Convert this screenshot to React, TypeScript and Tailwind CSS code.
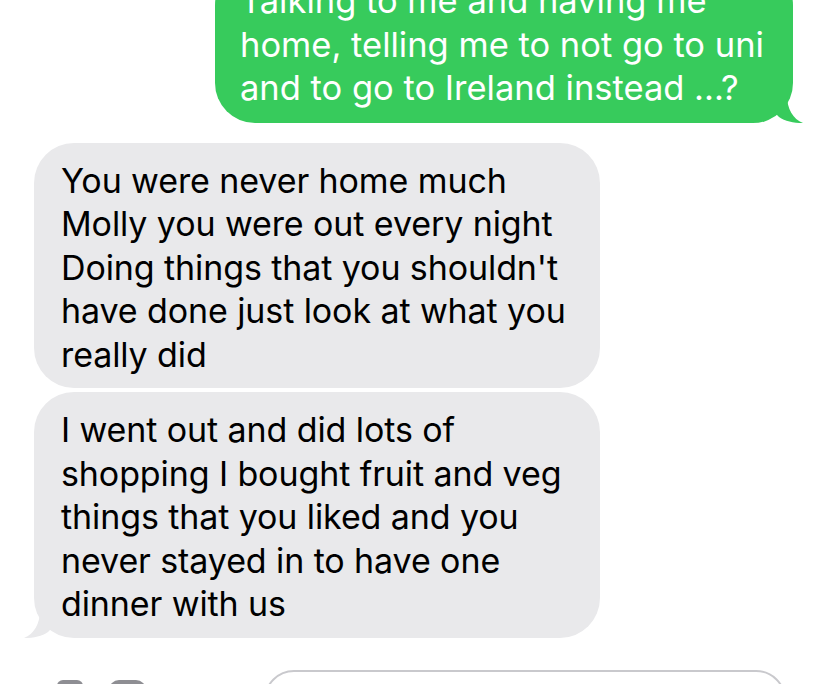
import React from "react";

const font = { fontFamily: "Inter, 'Liberation Sans', sans-serif" };

function TailRight() {
  return (
    <svg className="absolute right-[-12px] bottom-0" width="30" height="28" viewBox="0 0 30 28">
      <path d="M0 0 L12 0 C12 14 18 24 28 28 C18 28 10 26 4 22 C2 20 0 18 0 18 Z" fill="#37cb5c" />
    </svg>
  );
}

function TailLeft() {
  return (
    <svg className="absolute left-[-12px] bottom-0" width="30" height="28" viewBox="0 0 30 28">
      <path d="M30 0 L18 0 C18 14 12 24 2 28 C12 28 20 26 26 22 C28 20 30 18 30 18 Z" fill="#e9e9eb" />
    </svg>
  );
}

function Bubble({ lines, me, tail }: { lines: string[]; me?: boolean; tail?: boolean }) {
  return (
    <div
      className={
        me
          ? "relative w-[578px] rounded-[40px] bg-[#37cb5c] text-white pl-[25px] pr-4 pt-[14px] pb-[13px]"
          : "relative w-[566px] rounded-[40px] bg-[#e9e9eb] text-black pl-[27px] pr-4 pt-[16px] pb-[12px]"
      }
    >
      {tail && (me ? <TailRight /> : <TailLeft />)}
      <div
        className={
          me
            ? "relative text-[34.5px] leading-[43.5px] tracking-[0px]"
            : "relative text-[34px] leading-[43.5px] tracking-[-0.1px]"
        }
        style={font}
      >
        {lines.map((l, i) => (
          <div key={i} className="whitespace-nowrap">{l}</div>
        ))}
      </div>
    </div>
  );
}

export default function App() {
  return (
    <div className="w-[828px] h-[684px] overflow-hidden bg-white relative">
      <div className="flex flex-col">
        <div className="flex justify-end pr-[35px] mt-[-35px]">
          <Bubble
            me
            tail
            lines={[
              "Talking to me and having me",
              "home, telling me to not go to uni",
              "and to go to Ireland instead ...?",
            ]}
          />
        </div>
        <div className="flex flex-col gap-[4px] pl-[34px] mt-[20px]">
          <Bubble
            lines={[
              "You were never home much",
              "Molly you were out every night",
              "Doing things that you shouldn't",
              "have done just look at what you",
              "really did",
            ]}
          />
          <Bubble
            tail
            lines={[
              "I went out and did lots of",
              "shopping I bought fruit and veg",
              "things that you liked and you",
              "never stayed in to have one",
              "dinner with us",
            ]}
          />
        </div>
        <div className="flex items-start mt-[32px] pl-[57px] gap-[80px]">
          <div className="mt-[10px] w-[26px] h-[20px] rounded-t-[6px] bg-[#8e8e93]" />
          <div className="mt-[10px] w-[37px] h-[20px] rounded-t-[10px] bg-[#8e8e93] ml-[-54px]" />
          <div className="ml-[38px] w-[522px] h-[60px] rounded-[40px] border-2 border-[#c9c9cd]" />
        </div>
      </div>
    </div>
  );
}
